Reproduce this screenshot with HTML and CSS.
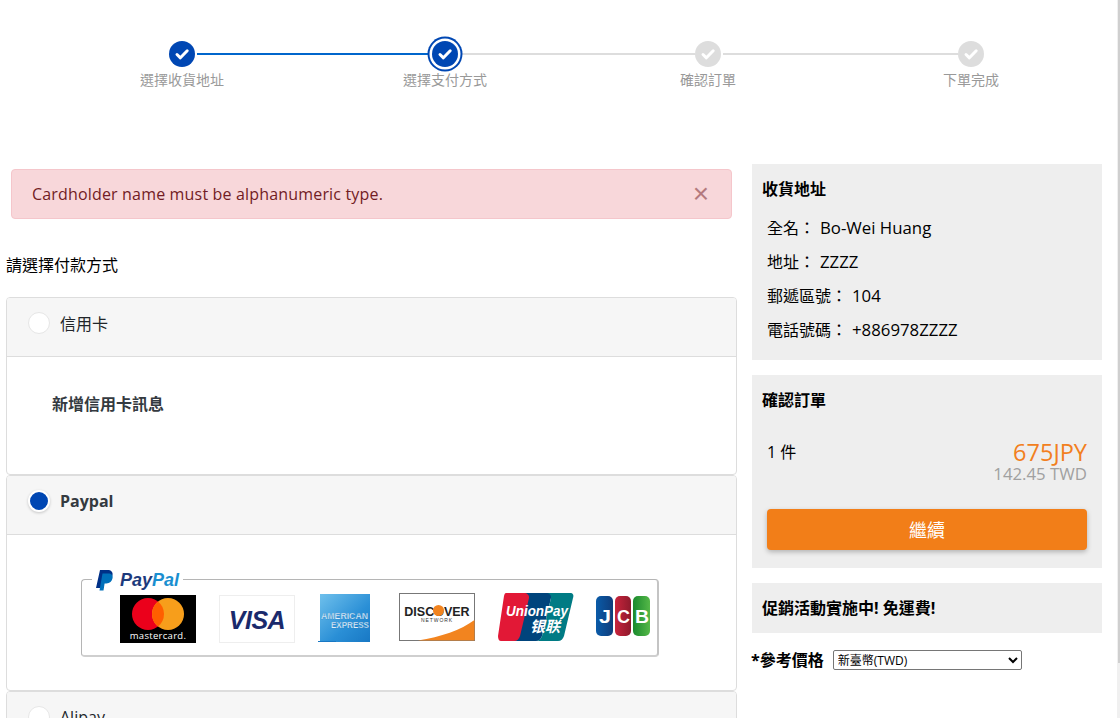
FILE: index.html
```html
<!DOCTYPE html>
<html lang="zh-Hant">
<head>
<meta charset="utf-8">
<title>選擇支付方式</title>
<link rel="stylesheet" href="styles.css">
</head>
<body>
<div class="scrollbar"></div>
<div class="stepper">
  <div class="step done link-blue">
    <span class="dot"><svg viewBox="0 0 26 26" class="check"><path d="M8 13.5l3.4 3.3L18.2 9.8"/></svg></span>
    <span class="step-label">選擇收貨地址</span>
  </div>
  <div class="step done current link-grey">
    <span class="dot"><svg viewBox="0 0 26 26" class="check"><path d="M8 13.5l3.4 3.3L18.2 9.8"/></svg></span>
    <span class="step-label">選擇支付方式</span>
  </div>
  <div class="step link-grey">
    <span class="dot"><svg viewBox="0 0 26 26" class="check"><path d="M8 13.5l3.4 3.3L18.2 9.8"/></svg></span>
    <span class="step-label">確認訂單</span>
  </div>
  <div class="step">
    <span class="dot"><svg viewBox="0 0 26 26" class="check"><path d="M8 13.5l3.4 3.3L18.2 9.8"/></svg></span>
    <span class="step-label">下單完成</span>
  </div>
</div>

<div class="columns">
  <main class="left">
    <div class="alert">
      <span class="alert-text">Cardholder name must be alphanumeric type.</span>
      <span class="alert-close">×</span>
    </div>
    <p class="choose">請選擇付款方式</p>

    <section class="pay-card">
      <header class="pay-head">
        <span class="radio"></span>
        <span class="pay-name">信用卡</span>
      </header>
      <div class="pay-body body-credit">
        <h3 class="new-card">新增信用卡訊息</h3>
      </div>
    </section>

    <section class="pay-card">
      <header class="pay-head">
        <span class="radio radio-on"></span>
        <span class="pay-name pay-name-on">Paypal</span>
      </header>
      <div class="pay-body body-paypal">
        <div class="logos">
          <div class="pp-legend">
            <svg class="pp-mark" viewBox="0 0 18 21"><path fill="#003087" d="M4 0h7.500c3.600 0 5.600 2 5 5.200-.7 3.700-3.300 5.800-7 5.800H6.800L5.600 18H0z"/><path fill="#0070ba" d="M6.500 3.500h6c2.900 0 4.600 1.800 4.100 4.600-.6 3.400-2.900 5.400-6.200 5.400H8.600L7.500 20.500H3.500z"/></svg>
            <span class="pp-word"><span class="pp-pay">Pay</span><span class="pp-pal">Pal</span></span>
          </div>
          <div class="logo-row">
            <svg class="logo" width="76" height="48" viewBox="0 0 76 48"><rect width="76" height="48"/><circle cx="28" cy="19" r="16" fill="#eb001b"/><circle cx="48" cy="19" r="16" fill="#f79e1b"/><path fill="#ff5f00" d="M38 6.510A16 16 0 0 1 38 31.490 16 16 0 0 1 38 6.510z"/><text x="38" y="44" class="t-mc">mastercard.</text></svg>
            <svg class="logo" width="76" height="48" viewBox="0 0 76 48"><rect x=".5" y=".5" width="75" height="47" fill="#fff" stroke="#eee"/><text x="38" y="34" class="t-visa">VISA</text></svg>
            <svg class="logo logo-amex" width="52" height="48" viewBox="0 0 52 48"><defs><linearGradient id="amex" x1="0" y1="0" x2="1" y2="1"><stop offset="0" stop-color="#6fc0ec"/><stop offset=".6" stop-color="#2a8fd6"/><stop offset="1" stop-color="#1878c4"/></linearGradient></defs><rect x="2" width="50" height="48" fill="url(#amex)"/><rect y="47" width="18" height="1" fill="#1878c4"/><text x="3" y="25" class="t-amex" textLength="47" lengthAdjust="spacingAndGlyphs">AMERICAN</text><text x="13" y="34" class="t-amex" textLength="38" lengthAdjust="spacingAndGlyphs">EXPRESS</text></svg>
            <svg class="logo logo-up" width="76" height="48" viewBox="0 0 76 48"><rect x=".5" y=".5" width="75" height="47" fill="#fff" stroke="#777"/><path fill="#f2841f" d="M19 47.500C42 44 62 37 75.500 27v20.500z"/><text x="38" y="23" class="t-disc">DISCOVER</text><circle cx="39.500" cy="17.500" r="5.500" fill="#f2841f"/><text x="38" y="29" class="t-net">NETWORK</text></svg>
            <svg class="logo logo-up" width="76" height="48" viewBox="0 0 76 48"><path fill="#e21836" d="M8 0h22c3 0 4 2 3 5L24 43c-1 3-3 5-6 5H3c-2 0-3-2-3-5L6 3c.5-2 1-3 2-3z"/><path fill="#00447c" d="M26 0h24c3 0 4 2 3 5L44 43c-1 3-3 5-6 5H16c3 0 5-2 6-5l9-38c.5-3 -2-5-5-5z"/><path fill="#007b84" d="M48 0h24c3 0 4 2 3 5L66 43c-1 3-3 5-6 5H38c3 0 5-2 6-5l9-38c.5-3-2-5-5-5z"/><text x="8" y="23" class="t-up" textLength="62" lengthAdjust="spacingAndGlyphs">UnionPay</text><text x="47" y="39" class="t-yl">银联</text></svg>
            <svg class="logo logo-jcb" width="54" height="48" viewBox="0 0 54 48"><defs><linearGradient id="jb" x1="0" x2="1" y1="0" y2="0"><stop offset="0" stop-color="#0a5ba8"/><stop offset="1" stop-color="#0f3d7c"/></linearGradient><linearGradient id="jr" x1="0" x2="1" y1="0" y2="0"><stop offset="0" stop-color="#c8243c"/><stop offset="1" stop-color="#8e1a2c"/></linearGradient><linearGradient id="jg" x1="0" x2="1" y1="0" y2="0"><stop offset="0" stop-color="#1a8a2e"/><stop offset="1" stop-color="#55b848"/></linearGradient></defs><rect y="1" width="17" height="40" rx="5" fill="url(#jb)"/><rect x="19" y="1" width="16" height="40" rx="5" fill="url(#jr)"/><rect x="37" y="1" width="17" height="40" rx="5" fill="url(#jg)"/><text x="3" y="28" class="t-jcb" textLength="12" lengthAdjust="spacingAndGlyphs">J</text><text x="21" y="28" class="t-jcb" textLength="13" lengthAdjust="spacingAndGlyphs">C</text><text x="39" y="28" class="t-jcb" textLength="14" lengthAdjust="spacingAndGlyphs">B</text></svg>
          </div>
        </div>
      </div>
    </section>

    <section class="pay-card">
      <header class="pay-head">
        <span class="radio"></span>
        <span class="pay-name">Alipay</span>
      </header>
    </section>
  </main>

  <aside class="right">
    <section class="panel panel-address">
      <h4 class="panel-title">收貨地址</h4>
      <p class="addr-row"><span>全名：</span><span class="val">Bo-Wei Huang</span></p>
      <p class="addr-row"><span>地址：</span><span class="val">ZZZZ</span></p>
      <p class="addr-row"><span>郵遞區號：</span><span class="val">104</span></p>
      <p class="addr-row"><span>電話號碼：</span><span class="val">+886978ZZZZ</span></p>
    </section>

    <section class="panel panel-order">
      <h4 class="panel-title">確認訂單</h4>
      <div class="order-row">
        <span class="qty">1 件</span>
        <div class="prices">
          <div class="price-main">675JPY</div>
          <div class="price-sub">142.45 TWD</div>
        </div>
      </div>
      <button class="continue" type="button">繼續</button>
    </section>

    <section class="panel panel-promo">
      <h4 class="panel-title">促銷活動實施中! 免運費!</h4>
    </section>

    <div class="ref-price">
      <label class="ref-label" for="cur">*參考價格</label>
      <select id="cur" class="ref-select"><option>新臺幣(TWD)</option></select>
    </div>
  </aside>
</div>
</body>
</html>
```

FILE: styles.css
```css
* { box-sizing: border-box; }
html, body { margin: 0; height: 100%; overflow: hidden; }
body {
  background: #fff;
  color: #212529;
  font-family: "Open Sans", "Noto Sans CJK TC", sans-serif;
  font-size: 16px;
}
.scrollbar {
  position: fixed; top: 0; right: 0; bottom: 0; width: 3px;
  background: #f0f0f0;
}
.scrollbar::after {
  content: ""; position: absolute; top: 0; left: 1px; width: 2px; height: 663px;
  background: #cfcfcf;
}

/* stepper */
.stepper {
  display: grid;
  grid-template-columns: repeat(4, 263px);
  padding: 41px 0 0 50px;
  height: 164px;
}
.step { position: relative; display: flex; flex-direction: column; align-items: center; }
.dot {
  position: relative; z-index: 1;
  width: 26px; height: 26px; border-radius: 50%;
  background: #ddd; flex: none;
}
.check { display: block; width: 26px; height: 26px; fill: none; stroke: #fff; stroke-width: 3; stroke-linecap: round; stroke-linejoin: round; }
.done .dot { background: #0047b3; }
.current .dot { box-shadow: 0 0 0 2.500px #fff, 0 0 0 4.500px #0047b3; }
.step-label { margin: 3px 0 0 1px; font-size: 14px; line-height: 19px; color: #999; }
.link-blue::after, .link-grey::after {
  content: ""; position: absolute; top: 12px; left: calc(50% + 15px); width: 235px; height: 2px;
}
.link-blue::after { background: #0066cc; }
.link-grey::after { background: #ddd; }

/* columns */
.columns { display: flex; align-items: flex-start; gap: 15px; padding-left: 6px; }
.left { width: 731px; flex: none; padding-top: 5px; }
.right { width: 350px; flex: none; }

.alert {
  display: flex; justify-content: space-between; align-items: center;
  height: 50px; margin: 0 5px;
  padding: 0 22px 0 20px;
  background: #f8d7da; border: 1px solid #f5c6cb; border-radius: 4px;
  color: #721c24; line-height: 24px;
}
.alert-text { letter-spacing: .17px; }
.alert-close { font: 400 28px/24px "Liberation Sans", sans-serif; color: #721c24; opacity: .5; }
.choose { margin: 34px 0 20px; font-size: 16px; line-height: 24px; color: #000; }

.pay-card { border: 1px solid #ddd; border-radius: 4px; overflow: hidden; }
.pay-head {
  display: flex; align-items: center; gap: 10px;
  height: 58px; padding: 0 0 8px 21px;
  background: #f6f6f6;
}
.radio {
  width: 22px; height: 22px; border-radius: 50%; flex: none;
  background: #fff; border: 1px solid #e6e6e6;
}
.radio-on { background: #0047b3; border: 2px solid #fff; box-shadow: 0 1px 3px rgba(0,0,0,.2); }
.pay-name { font-size: 16px; color: #212529; }
.pay-name-on { font-weight: 700; color: #343a40; }
.pay-body { border-top: 1px solid #ddd; }
.body-credit { height: 118px; padding: 35px 0 0 45px; }
.new-card { margin: 0; font-size: 16px; line-height: 24px; font-weight: 700; color: #343a40; }
.body-paypal { height: 156px; padding: 44px 0 0 74px; }

.logos {
  position: relative; width: 578px; height: 78px;
  border: 1px solid #b5b5b5; border-bottom: 2px solid #cfcfcf; border-right: 2px solid #c4c4c4; border-radius: 4px;
  padding: 15px 0 0 38px;
}
.pp-legend {
  position: absolute; left: 10px; top: -11px; height: 22px; padding: 0 4px;
  display: flex; align-items: center; gap: 6px; background: #fff;
}
.pp-mark { width: 18px; height: 21px; display: block; }
.pp-word { font-family: "Liberation Sans", sans-serif; font-weight: 700; font-style: italic; font-size: 18px; }
.pp-pay { color: #1d3a7c; }
.pp-pal { color: #1a8fd0; }
.logo-row { display: flex; gap: 23px; align-items: flex-start; }
.logo { display: block; flex: none; }
.logo-amex { margin-top: -1px; margin-right: 6px; }
.logo-up { margin-top: -2px; }
.logo-jcb { margin-left: -1px; }
.t-mc { font: 400 9.500px "Open Sans", sans-serif; fill: #fff; text-anchor: middle; letter-spacing: .3px; }
.t-visa { font: italic 700 25px "Liberation Sans", sans-serif; fill: #1a2a6c; text-anchor: middle; letter-spacing: -.5px; }
.t-amex { font: 700 9px "Liberation Sans", sans-serif; fill: #dff0fb; stroke: #2f7fc0; stroke-width: .25px; }
.t-disc { font: 700 12.500px "Liberation Sans", sans-serif; fill: #222; text-anchor: middle; }
.t-net { font: 400 5px "Liberation Sans", sans-serif; fill: #333; text-anchor: middle; letter-spacing: .9px; }
.t-up { font: italic 700 14px "Liberation Sans", sans-serif; fill: #fff; }
.t-yl { font: italic 700 15px "Noto Sans CJK SC", sans-serif; fill: #fff; text-anchor: middle; }
.t-jcb { font: 700 18px "Liberation Sans", sans-serif; fill: #fff; }

/* right panels */
.panel { background: #eee; padding: 0 15px 0 10px; margin-bottom: 15px; color: #000; }
.panel-title { margin: 0; font-size: 16px; line-height: 24px; font-weight: 700; }
.panel-address { height: 196px; padding-top: 13px; }
.panel-address .panel-title { margin-bottom: 15px; }
.addr-row { margin: 0 0 10px 5px; line-height: 24px; display: flex; gap: 5px; }
.val { font-size: 16.800px; }
.panel-order { height: 193px; padding-top: 13px; }
.order-row { display: flex; justify-content: space-between; margin: 28px 0 0 5px; }
.qty { line-height: 24px; }
.prices { text-align: right; }
.price-main { font-size: 23.500px; line-height: 24px; color: #f27f20; }
.price-sub { font-size: 16.800px; line-height: 20px; color: #a0a0a0; }
.continue {
  display: block; width: 320px; height: 41px; margin: 25px 0 0 5px;
  padding: 0 0 2px;
  border: 0; border-radius: 4px;
  background: #f27e18; color: #fff;
  font: 18px "Open Sans", "Noto Sans CJK TC", sans-serif;
  box-shadow: 0 2px 5px rgba(0,0,0,.25);
}
.panel-promo { height: 50px; padding-top: 13px; }
.ref-price { display: flex; align-items: center; gap: 9px; margin: 17px 0 0 -1px; height: 20px; }
.ref-label { font-size: 16px; font-weight: 700; color: #000; line-height: 20px; }
.ref-select {
  width: 189px; height: 20px; font: 12px "Open Sans", "Noto Sans CJK TC", sans-serif;
  padding: 0; background: #fff; border: 1px solid #767676; border-radius: 2px; color: #000;
}
```
